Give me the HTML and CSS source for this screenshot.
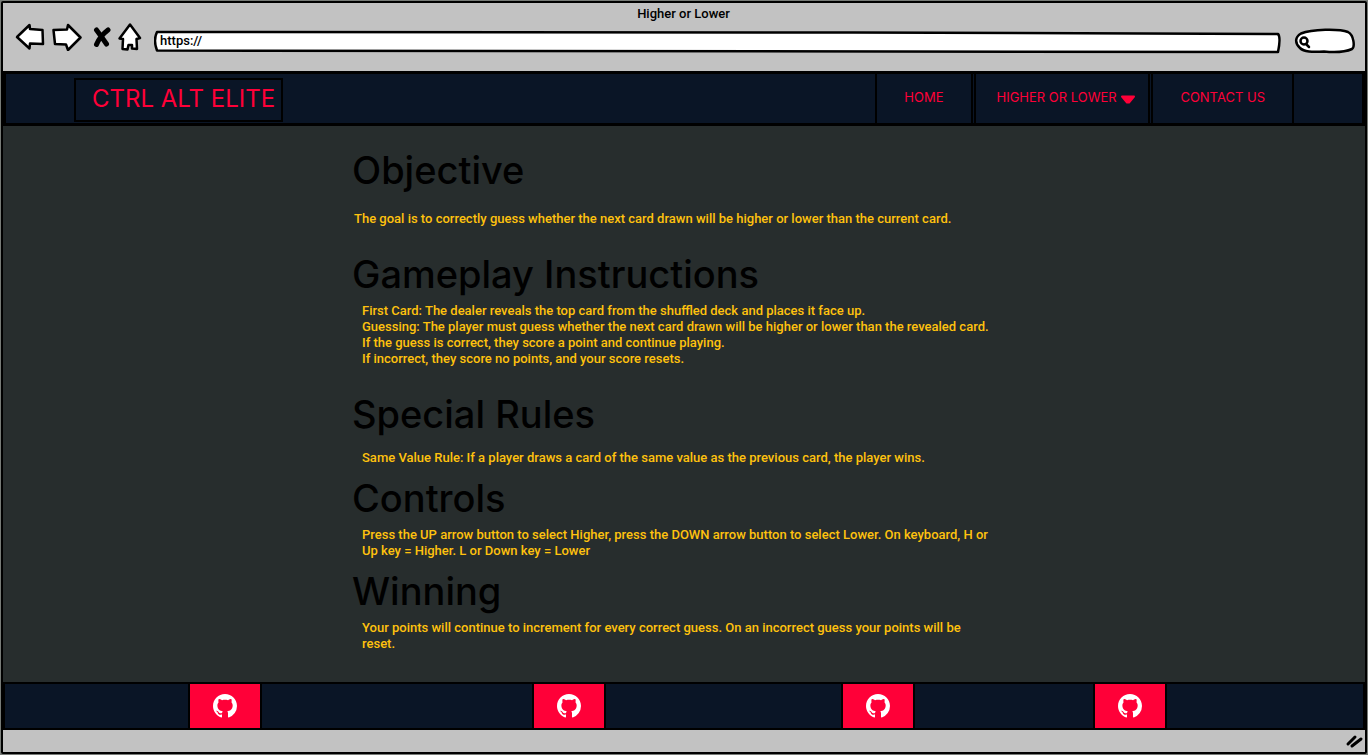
FILE: index.html
```html
<!DOCTYPE html>
<html lang="en">
<head>
<meta charset="utf-8">
<title>Higher or Lower</title>
<link rel="stylesheet" href="styles.css">
</head>
<body>
<svg class="sprite" aria-hidden="true">
  <symbol id="github" viewBox="0 0 16 16"><path d="M8 0C3.58 0 0 3.58 0 8c0 3.54 2.29 6.53 5.47 7.59.4.07.55-.17.55-.38 0-.19-.01-.82-.01-1.49-2.01.37-2.53-.49-2.69-.94-.09-.23-.48-.94-.82-1.13-.28-.15-.68-.52-.01-.53.63-.01 1.08.58 1.23.82.72 1.21 1.87.87 2.33.66.07-.52.28-.87.51-1.07-1.78-.2-3.64-.89-3.64-3.95 0-.87.31-1.59.82-2.15-.08-.2-.36-1.02.08-2.12 0 0 .67-.21 2.2.82.64-.18 1.32-.27 2-.27s1.36.09 2 .27c1.53-1.04 2.2-.82 2.2-.82.44 1.1.16 1.92.08 2.12.51.56.82 1.27.82 2.15 0 3.07-1.87 3.75-3.65 3.95.29.25.54.73.54 1.48 0 1.07-.01 1.93-.01 2.2 0 .21.15.46.55.38A8.01 8.01 0 0 0 16 8c0-4.42-3.58-8-8-8z" fill="currentColor"/></symbol>
</svg>
<div class="window">
  <header class="chrome">
    <div class="chrome-title">Higher or Lower</div>
    <div class="toolbar">
      <button class="tool back" aria-label="Back"><svg width="30" height="28" viewBox="0 0 30 28"><path d="M2 14 14.500 2 15 6 27.500 7 28 21 15 20.500 14.500 25.500Z"/></svg></button>
      <button class="tool forward" aria-label="Forward"><svg width="30" height="28" viewBox="0 0 30 28"><path d="M1.500 7 15 6.500 16 2 28.500 14.500 16 27 14 21.500 3 21Z"/></svg></button>
      <button class="tool stop" aria-label="Stop"><svg width="18" height="20" viewBox="0 0 18 20"><path class="cross" d="M3.500 3Q8 9 13.500 17M15 3Q7 9 3.500 17.500"/></svg></button>
      <button class="tool home" aria-label="Home"><svg width="24" height="28" viewBox="0 0 24 28"><path d="M12 1.500 22 15 18.500 16 19 26 14 25.500V22H10.500L9.500 26.500 4.500 26 5 16 1.500 15.500Z"/></svg></button>
      <div class="address">
        <svg viewBox="0 0 1128 24" preserveAspectRatio="none" aria-hidden="true"><path d="M3 2Q400 1 700 2.500 1000 3 1125 4 1128 7 1125 22 600 20.500 3 20.500-1 10 3 2Z"/></svg>
        <input type="text" value="https://" aria-label="Address">
      </div>
      <div class="search">
        <svg width="62" height="26" viewBox="0 0 62 26" aria-hidden="true"><path d="M7 5.500C18 1 45 .5 54 4 60 7 61 19 58 21 49 25 40 24.500 30 23.500 18 24 10 24 6 20 .5 15 1 9 7 5.500Z"/><circle cx="10" cy="13" r="3.500"/><path d="M12 16 15 19"/></svg>
        <input type="text" aria-label="Search">
      </div>
    </div>
  </header>

  <nav class="navbar" aria-label="Main">
    <a class="brand" href="#">CTRL ALT ELITE</a>
    <div class="links">
      <a class="link" href="#">HOME</a>
      <a class="link game" href="#">HIGHER OR LOWER <svg width="16" height="12" viewBox="0 0 16 12" aria-hidden="true"><path d="M2 2.500H14L9 8.500H7Z"/></svg></a>
      <a class="link" href="#">CONTACT US</a>
    </div>
  </nav>

  <main class="content">
    <div class="rules">
      <section class="roomy">
        <h1>Objective</h1>
        <p class="flush">The goal is to correctly guess whether the next card drawn will be higher or lower than the current card.</p>
      </section>
      <section>
        <h1>Gameplay Instructions</h1>
        <p>First Card: The dealer reveals the top card from the shuffled deck and places it face up.<br>Guessing: The player must guess whether the next card drawn will be higher or lower than the revealed card.<br>If the guess is correct, they score a point and continue playing.<br>If incorrect, they score no points, and your score resets.</p>
      </section>
      <section class="roomy compact">
        <h1>Special Rules</h1>
        <p>Same Value Rule: If a player draws a card of the same value as the previous card, the player wins.</p>
      </section>
      <section class="compact">
        <h1>Controls</h1>
        <p>Press the UP arrow button to select Higher, press the DOWN arrow button to select Lower. On keyboard, H or<br>Up key = Higher. L or Down key = Lower</p>
      </section>
      <section>
        <h1>Winning</h1>
        <p>Your points will continue to increment for every correct guess. On an incorrect guess your points will be<br>reset.</p>
      </section>
    </div>
  </main>

  <footer class="footer">
    <a href="#" aria-label="GitHub profile 1"><svg><use href="#github"/></svg></a>
    <a href="#" aria-label="GitHub profile 2"><svg><use href="#github"/></svg></a>
    <a href="#" aria-label="GitHub profile 3"><svg><use href="#github"/></svg></a>
    <a href="#" aria-label="GitHub profile 4"><svg><use href="#github"/></svg></a>
  </footer>
  <div class="status">
    <svg width="20" height="16" viewBox="0 0 20 16" aria-hidden="true"><path d="M3 11 10 4M7 13 16 6"/></svg>
  </div>
</div>
</body>
</html>
```
FILE: styles.css
```css
* { box-sizing: border-box; }

body {
  margin: 0;
  padding: 1px;
  background: #777b77;
  font: 500 13px/16px Roboto, "Liberation Sans", sans-serif;
  color: #000;
}

.sprite { position: absolute; width: 0; height: 0; }

.window {
  display: flex;
  flex-direction: column;
  min-height: calc(100vh - 2px);
  border: 2px solid #000;
  border-radius: 2px;
  background: #c2c2c2;
}

.chrome { height: 68px; padding: 3px 9px 0 12px; }
.chrome-title { padding-right: 4px; text-align: center; }

.toolbar { display: flex; align-items: center; height: 36px; }
.toolbar svg { display: block; fill: #fff; stroke: #000; stroke-width: 2.500; stroke-linejoin: round; stroke-linecap: round; }
.tool { padding: 0; border: 0; background: none; }
.forward { margin-left: 7px; }
.stop { margin-left: 11px; }
.home { margin-left: 7px; }
.tool svg { margin-top: -6px; }
.toolbar .cross { fill: none; stroke-width: 5; }

.address { position: relative; flex: 1; height: 24px; margin: 4px 0 0 12px; }
.address svg, .search svg { position: absolute; inset: 0; }
.address svg { width: 100%; height: 100%; }
.address path { vector-effect: non-scaling-stroke; }
.address input, .search input {
  position: relative;
  width: 100%;
  height: 100%;
  padding: 0 6px 3px;
  border: 0;
  outline: 0;
  background: none;
  font: inherit;
}
.search { position: relative; width: 62px; height: 26px; margin: 2px 0 0 13px; }
.search input { padding-left: 20px; }

.navbar {
  display: flex;
  height: 55px;
  padding: 0 68px;
  border: 3px solid #000;
  background: #0a1526;
}
.navbar a { color: #ff0038; text-decoration: none; }
.brand {
  margin: 4px 0 1px;
  padding: 0 6px 0 16px;
  border: 2px solid #000;
  font: 400 24px/38px Inter, sans-serif;
}
.links { display: flex; margin-left: auto; }
.link {
  padding: 0 27px;
  border: solid #000;
  border-width: 0 2px;
  margin-left: 1px;
  font: 400 13px/46px Inter, sans-serif;
}
.game { padding: 0 12px 0 21px; }
.game svg { vertical-align: -4px; fill: #ff0038; stroke: #ff0038; stroke-width: 2; stroke-linejoin: round; }

.content { flex: 1; padding: 20px 24px 0; background: #272d2d; }
.rules { display: flex; flex-direction: column; width: 664px; max-width: 100%; margin: 0 auto; }
.rules section { margin-bottom: 23px; }
.rules .compact { margin-bottom: 8px; }
.rules section:last-child { margin-bottom: 0; }
h1 { margin: 0 0 5px; font: 500 38px/48px Inter, sans-serif; }
.roomy h1 { margin-bottom: 17px; }
.compact h1 { margin-bottom: 5px; }
.roomy.compact h1 { margin-bottom: 12px; }
.rules p { margin: 0; padding-left: 10px; color: #ffc20e; }
.rules .flush { padding-left: 2px; }

.footer {
  display: grid;
  grid-template-columns: 183fr 74px 270fr 74px 235fr 74px 178fr 74px 196fr;
  height: 48px;
  border: 2px solid #000;
  background: #0a1526;
}
.footer a {
  display: grid;
  place-items: center;
  border: solid #000;
  border-width: 0 2px;
  background: #ff0038;
  color: #fff;
}
.footer a:nth-child(1) { grid-column: 2; }
.footer a:nth-child(2) { grid-column: 4; }
.footer a:nth-child(3) { grid-column: 6; }
.footer a:nth-child(4) { grid-column: 8; }
.footer svg { width: 24px; height: 24px; }

.status { display: flex; justify-content: flex-end; align-items: center; height: 22px; padding-bottom: 0; }
.status svg { fill: none; stroke: #000; stroke-width: 3; stroke-linecap: round; }
```
